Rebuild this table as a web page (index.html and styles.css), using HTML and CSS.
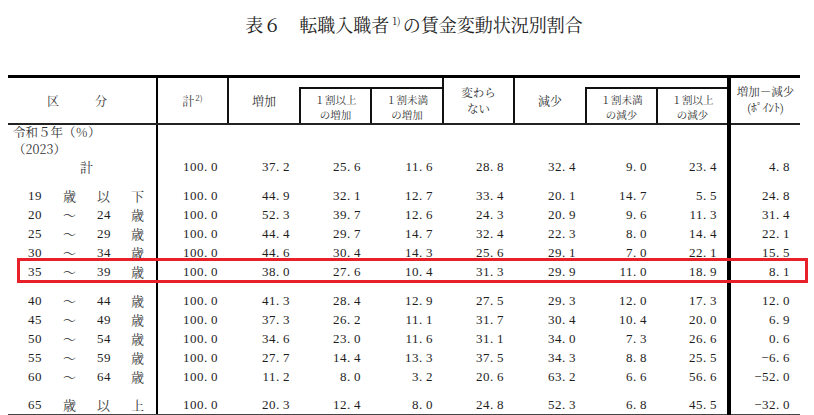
FILE: index.html
```html
<!DOCTYPE html>
<html lang="ja">
<head>
<meta charset="utf-8">
<title>表６ 転職入職者の賃金変動状況別割合</title>
<link rel="stylesheet" href="styles.css">
</head>
<body>
<div class="page">
  <h1 class="title">表６　転職入職者<sup>1)</sup>の賃金変動状況別割合</h1>
  <div class="sheet">
    <table class="tbl">
      <colgroup>
        <col class="w0"><col class="w71"><col class="w72"><col class="w71"><col class="w72"><col class="w71"><col class="w72"><col class="w71"><col class="w72"><col class="w71">
      </colgroup>
      <thead>
        <tr class="h1">
          <th rowspan="2" class="c0 kubun">区　　　分</th>
          <th rowspan="2" class="hd">計<sup>2)</sup></th>
          <th rowspan="2" class="hd grp">増加</th>
          <th colspan="2" class="gap"></th>
          <th rowspan="2" class="hd two"><span class="ln">変わら</span><span class="ln">ない</span></th>
          <th rowspan="2" class="hd grp">減少</th>
          <th colspan="2" class="gap gap-end"></th>
          <th rowspan="2" class="hd two last"><span class="ln">増加－減少</span><span class="ln">(ﾎﾟｲﾝﾄ)</span></th>
        </tr>
        <tr class="h2">
          <th class="sub"><span class="ln">１割以上</span><span class="ln">の増加</span></th>
          <th class="sub"><span class="ln">１割未満</span><span class="ln">の増加</span></th>
          <th class="sub"><span class="ln">１割未満</span><span class="ln">の減少</span></th>
          <th class="sub sub-end"><span class="ln">１割以上</span><span class="ln">の減少</span></th>
        </tr>
      </thead>
      <tbody>
        <tr class="r17"><td class="c0"><span class="note">令和５年（％）</span></td><td></td><td></td><td></td><td></td><td></td><td></td><td></td><td class="c8"></td><td></td></tr>
        <tr class="r17"><td class="c0"><span class="note">（2023）</span></td><td></td><td></td><td></td><td></td><td></td><td></td><td></td><td class="c8"></td><td></td></tr>
        <tr class="r18"><td class="c0"><span class="total">計</span></td><td>100<span class="pt">.</span>0</td><td>37<span class="pt">.</span>2</td><td>25<span class="pt">.</span>6</td><td>11<span class="pt">.</span>6</td><td>28<span class="pt">.</span>8</td><td>32<span class="pt">.</span>4</td><td>9<span class="pt">.</span>0</td><td class="c8">23<span class="pt">.</span>4</td><td>4<span class="pt">.</span>8</td></tr>
        <tr class="sp"><td class="c0"></td><td></td><td></td><td></td><td></td><td></td><td></td><td></td><td class="c8"></td><td></td></tr>
        <tr class="r19"><td class="c0"><div class="age"><span class="num">19</span><span>歳</span><span>以</span><span>下</span></div></td><td>100<span class="pt">.</span>0</td><td>44<span class="pt">.</span>9</td><td>32<span class="pt">.</span>1</td><td>12<span class="pt">.</span>7</td><td>33<span class="pt">.</span>4</td><td>20<span class="pt">.</span>1</td><td>14<span class="pt">.</span>7</td><td class="c8">5<span class="pt">.</span>5</td><td>24<span class="pt">.</span>8</td></tr>
        <tr class="r19"><td class="c0"><div class="age"><span class="num">20</span><span>～</span><span class="num">24</span><span>歳</span></div></td><td>100<span class="pt">.</span>0</td><td>52<span class="pt">.</span>3</td><td>39<span class="pt">.</span>7</td><td>12<span class="pt">.</span>6</td><td>24<span class="pt">.</span>3</td><td>20<span class="pt">.</span>9</td><td>9<span class="pt">.</span>6</td><td class="c8">11<span class="pt">.</span>3</td><td>31<span class="pt">.</span>4</td></tr>
        <tr class="r19"><td class="c0"><div class="age"><span class="num">25</span><span>～</span><span class="num">29</span><span>歳</span></div></td><td>100<span class="pt">.</span>0</td><td>44<span class="pt">.</span>4</td><td>29<span class="pt">.</span>7</td><td>14<span class="pt">.</span>7</td><td>32<span class="pt">.</span>4</td><td>22<span class="pt">.</span>3</td><td>8<span class="pt">.</span>0</td><td class="c8">14<span class="pt">.</span>4</td><td>22<span class="pt">.</span>1</td></tr>
        <tr class="r19"><td class="c0"><div class="age"><span class="num">30</span><span>～</span><span class="num">34</span><span>歳</span></div></td><td>100<span class="pt">.</span>0</td><td>44<span class="pt">.</span>6</td><td>30<span class="pt">.</span>4</td><td>14<span class="pt">.</span>3</td><td>25<span class="pt">.</span>6</td><td>29<span class="pt">.</span>1</td><td>7<span class="pt">.</span>0</td><td class="c8">22<span class="pt">.</span>1</td><td>15<span class="pt">.</span>5</td></tr>
        <tr class="r19"><td class="c0"><div class="age"><span class="num">35</span><span>～</span><span class="num">39</span><span>歳</span></div></td><td>100<span class="pt">.</span>0</td><td>38<span class="pt">.</span>0</td><td>27<span class="pt">.</span>6</td><td>10<span class="pt">.</span>4</td><td>31<span class="pt">.</span>3</td><td>29<span class="pt">.</span>9</td><td>11<span class="pt">.</span>0</td><td class="c8">18<span class="pt">.</span>9</td><td>8<span class="pt">.</span>1</td></tr>
        <tr class="sp"><td class="c0"></td><td></td><td></td><td></td><td></td><td></td><td></td><td></td><td class="c8"></td><td></td></tr>
        <tr class="r19"><td class="c0"><div class="age"><span class="num">40</span><span>～</span><span class="num">44</span><span>歳</span></div></td><td>100<span class="pt">.</span>0</td><td>41<span class="pt">.</span>3</td><td>28<span class="pt">.</span>4</td><td>12<span class="pt">.</span>9</td><td>27<span class="pt">.</span>5</td><td>29<span class="pt">.</span>3</td><td>12<span class="pt">.</span>0</td><td class="c8">17<span class="pt">.</span>3</td><td>12<span class="pt">.</span>0</td></tr>
        <tr class="r19"><td class="c0"><div class="age"><span class="num">45</span><span>～</span><span class="num">49</span><span>歳</span></div></td><td>100<span class="pt">.</span>0</td><td>37<span class="pt">.</span>3</td><td>26<span class="pt">.</span>2</td><td>11<span class="pt">.</span>1</td><td>31<span class="pt">.</span>7</td><td>30<span class="pt">.</span>4</td><td>10<span class="pt">.</span>4</td><td class="c8">20<span class="pt">.</span>0</td><td>6<span class="pt">.</span>9</td></tr>
        <tr class="r19"><td class="c0"><div class="age"><span class="num">50</span><span>～</span><span class="num">54</span><span>歳</span></div></td><td>100<span class="pt">.</span>0</td><td>34<span class="pt">.</span>6</td><td>23<span class="pt">.</span>0</td><td>11<span class="pt">.</span>6</td><td>31<span class="pt">.</span>1</td><td>34<span class="pt">.</span>0</td><td>7<span class="pt">.</span>3</td><td class="c8">26<span class="pt">.</span>6</td><td>0<span class="pt">.</span>6</td></tr>
        <tr class="r19"><td class="c0"><div class="age"><span class="num">55</span><span>～</span><span class="num">59</span><span>歳</span></div></td><td>100<span class="pt">.</span>0</td><td>27<span class="pt">.</span>7</td><td>14<span class="pt">.</span>4</td><td>13<span class="pt">.</span>3</td><td>37<span class="pt">.</span>5</td><td>34<span class="pt">.</span>3</td><td>8<span class="pt">.</span>8</td><td class="c8">25<span class="pt">.</span>5</td><td>−6<span class="pt">.</span>6</td></tr>
        <tr class="r19"><td class="c0"><div class="age"><span class="num">60</span><span>～</span><span class="num">64</span><span>歳</span></div></td><td>100<span class="pt">.</span>0</td><td>11<span class="pt">.</span>2</td><td>8<span class="pt">.</span>0</td><td>3<span class="pt">.</span>2</td><td>20<span class="pt">.</span>6</td><td>63<span class="pt">.</span>2</td><td>6<span class="pt">.</span>6</td><td class="c8">56<span class="pt">.</span>6</td><td>−52<span class="pt">.</span>0</td></tr>
        <tr class="sp"><td class="c0"></td><td></td><td></td><td></td><td></td><td></td><td></td><td></td><td class="c8"></td><td></td></tr>
        <tr class="r19 end"><td class="c0"><div class="age"><span class="num">65</span><span>歳</span><span>以</span><span>上</span></div></td><td>100<span class="pt">.</span>0</td><td>20<span class="pt">.</span>3</td><td>12<span class="pt">.</span>4</td><td>8<span class="pt">.</span>0</td><td>24<span class="pt">.</span>8</td><td>52<span class="pt">.</span>3</td><td>6<span class="pt">.</span>8</td><td class="c8">45<span class="pt">.</span>5</td><td>−32<span class="pt">.</span>0</td></tr>
      </tbody>
    </table>
    <div class="highlight" aria-hidden="true"></div>
  </div>
</div>
</body>
</html>
```
FILE: styles.css
```css
* { box-sizing: border-box; }

body {
  margin: 0;
  background: #fff;
  color: #222;
  font-family: "Noto Serif CJK JP", "Noto Sans CJK JP", sans-serif;
}

.page {
  width: 814px;
  height: 415px;
  overflow: hidden;
}

.title {
  margin: 0;
  height: 75px;
  padding: 13px 0 0 14px;
  text-align: center;
  font-size: 18px;
  line-height: 22px;
  font-weight: normal;
  color: #222;
}

.title sup {
  font-size: 10px;
  vertical-align: 7px;
  line-height: 0;
  margin: 0 2px 0 3px;
}

.sheet {
  position: relative;
  padding-left: 8px;
}

.tbl {
  border-collapse: collapse;
  table-layout: fixed;
  width: 792px;
}

.w0 { width: 149px; }
.w71 { width: 71px; }
.w72 { width: 72px; }

.tbl th,
.tbl td {
  padding: 0;
}

/* header */
.tbl thead th {
  font-weight: normal;
  color: #333;
  font-size: 12px;
  line-height: 15px;
  vertical-align: middle;
  text-align: center;
}

.h1 { height: 11px; }
.h2 { height: 35px; }

.h1 th {
  border-top: 3px solid #000;
}

.tbl thead th[rowspan],
.h2 th {
  border-bottom: 2px solid #222;
}

.kubun {
  padding-right: 10px !important;
}

.hd {
  border-right: 2px solid #111;
}

.hd sup {
  font-size: 8px;
  line-height: 0;
  vertical-align: 5px;
  margin-left: 1px;
}

.hd.grp { border-right: none; }

.tbl thead th.two {
  font-size: 11.5px;
}

.two .ln {
  display: block;
  height: 16.7px;
  line-height: 16.7px;
}

.tbl thead th.last {
  border-left: 4px solid #000;
  border-right: none;
  padding-bottom: 2px;
}

.gap {
  border-right: 2px solid #111;
}

.gap-end { border-right: 4px solid #000; }

.tbl thead th.sub {
  font-size: 10.5px;
  vertical-align: top;
  border-top: 2px solid #111;
  border-left: 2px solid #111;
  border-right: 2px solid #111;
  padding-top: 3px;
}

.sub .ln {
  display: block;
  height: 15.5px;
  line-height: 15.5px;
}

.tbl thead th.sub-end { border-right: 4px solid #000; }

.c0 {
  border-right: 2px solid #000;
}

/* body */
.tbl tbody td {
  font-family: "Liberation Serif", "Times New Roman", serif;
  font-size: 13px;
  letter-spacing: 0.5px;
  text-align: right;
  padding-right: 10px;
  line-height: 15px;
  vertical-align: middle;
  color: #1e1e1e;
  white-space: nowrap;
}

.tbl tbody td.c0 {
  text-align: left;
  padding: 0;
  letter-spacing: 0;
}

.tbl tbody td.c8 {
  border-right: 4px solid #000;
}

.pt { margin-right: 3.25px; }

.r17 { height: 17px; }
.r18 { height: 18px; }
.r19 { height: 19px; }
.sp { height: 10px; }

.end td {
  border-bottom: 2px solid #444;
}

.note {
  display: block;
  padding-left: 5px;
  font-family: "Noto Serif CJK JP", "Noto Sans CJK JP", sans-serif;
  font-size: 12.5px;
  color: #333;
}

.total {
  display: block;
  padding-left: 72px;
  font-family: "Noto Serif CJK JP", "Noto Sans CJK JP", sans-serif;
  font-size: 13px;
  color: #333;
}

.age {
  display: grid;
  grid-template-columns: 35px 34px 34px 20px;
  padding-left: 20px;
  font-family: "Noto Serif CJK JP", "Noto Sans CJK JP", sans-serif;
  font-size: 13px;
  color: #333;
}

.age .num {
  font-family: "Liberation Serif", "Times New Roman", serif;
  letter-spacing: 0.5px;
  color: #1e1e1e;
}

.highlight {
  position: absolute;
  left: 17px;
  top: 183px;
  width: 791px;
  height: 25px;
  border: 3px solid #e8202a;
  pointer-events: none;
}
```
